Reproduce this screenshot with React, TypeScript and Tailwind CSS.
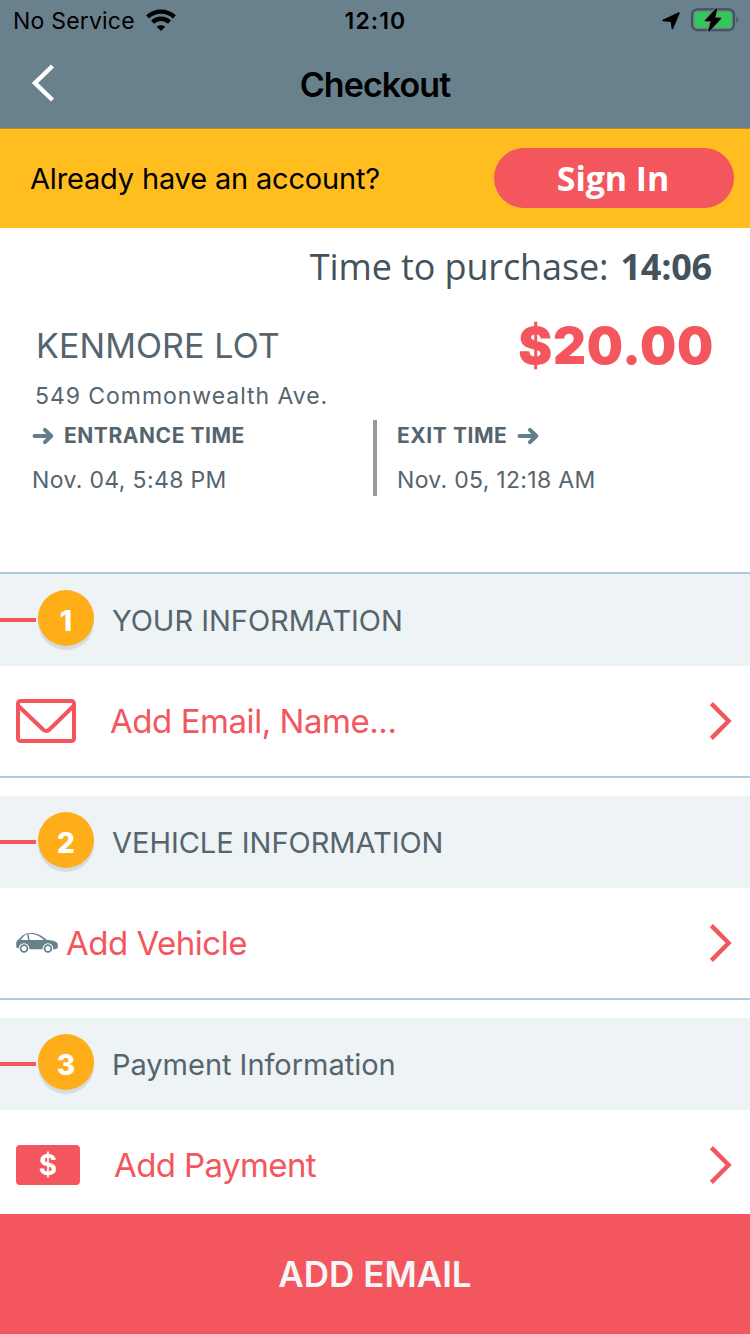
import React from "react";

function WifiIcon() {
  return (
    <svg className="ml-[11px] h-[22px] w-[30px]" viewBox="0 0 30 22" fill="none" stroke="#000" strokeWidth="4.400">
      <path d="M1.6 7.8C9.3 .9 20.7 .9 28.4 7.8" />
      <path d="M6.5 13.1C11.4 8.7 18.6 8.7 23.5 13.1" />
      <path d="M15 22L10.7 17.8C13.2 15.8 16.8 15.8 19.3 17.8Z" fill="#000" stroke="none" />
    </svg>
  );
}

function LocationIcon() {
  return (
    <svg className="mt-0.5 h-[18px] w-[18px]" viewBox="0 0 18 18" fill="#000" stroke="#000" strokeWidth="1.6" strokeLinejoin="round">
      <path d="M17 1L10.400 16.400L9.400 9.200L1.200 8.400Z" />
    </svg>
  );
}

function BatteryIcon() {
  return (
    <svg className="ml-[11px] h-6 w-[47px]" viewBox="0 0 47 24">
      <rect x="1" y="1.2" width="42" height="21" rx="5.5" fill="none" stroke="#434f5a" strokeWidth="2" />
      <rect x="3.6" y="3.8" width="37" height="16" rx="3" fill="#33c75a" />
      <path d="M45.500 8.5c2 1.4 2 5 0 6.500z" fill="#434f5a" />
      <path d="M25.500 .5L14.500 12.800h6L17.500 23.200L29.500 10.300h-6z" fill="#000" stroke="#69818d" strokeWidth="3" strokeLinejoin="round" />
      <path d="M25.500 .9L14.800 12.500h6L18 22.700L29.200 10.500h-6z" fill="#000" stroke="#000" strokeWidth="1.500" strokeLinejoin="round" />
    </svg>
  );
}

function ArrowIcon() {
  return (
    <svg className="h-[18px] w-[22px]" viewBox="0 0 22 18" fill="none" stroke="#637e8c" strokeWidth="4" strokeLinecap="round" strokeLinejoin="round">
      <path d="M2.500 9H18.500M13 2.800L19.200 9L13 15.200" />
    </svg>
  );
}

function Chevron() {
  return (
    <svg className="ml-auto h-[40px] w-6" viewBox="0 0 24 40" fill="none" stroke="#f3565d" strokeWidth="4.400">
      <path d="M2.400 2.600L19.600 20L2.400 37.400" />
    </svg>
  );
}

function EnvelopeIcon() {
  return (
    <svg className="h-11 w-[60px]" viewBox="0 0 60 44" fill="none" stroke="#f3565d" strokeWidth="4" strokeLinejoin="round">
      <rect x="2" y="2" width="56" height="40" rx="2.500" />
      <path d="M2.500 7L26.500 30Q30 34 34 30L57.500 7" />
    </svg>
  );
}

function CarIcon() {
  return (
    <svg className="h-5 w-[42px]" viewBox="0 0 42 20" fill="none">
      <path
        d="M.2 14.500V9.500Q.5 7 3 6L6.500 2.500Q10 .1 15 .1C21.500 .1 25 2.200 30.500 6.800C36 7.200 41.800 8.500 41.800 11.500V15L39.500 16.200H37.100A5.300 5.300 0 0 0 26.600 16.200H13.300A5.300 5.300 0 0 0 2.800 15.400Z"
        fill="#68818d"
      />
      <path d="M4.600 6.900L7.800 3.200Q9 1.600 11 1.200L12.200 7Z M12.400 1.100C19 .4 23.500 3 28 7H13.600Z" fill="#fff" />
      <circle cx="8" cy="15.500" r="5.300" fill="#fff" />
      <circle cx="31.900" cy="15.500" r="5.300" fill="#fff" />
      <circle cx="8" cy="15.500" r="3.400" stroke="#68818d" strokeWidth="1.800" />
      <circle cx="31.900" cy="15.500" r="3.400" stroke="#68818d" strokeWidth="1.800" />
    </svg>
  );
}

function CashIcon() {
  return (
    <div className="flex h-10 w-16 items-center justify-center rounded-[4px] bg-[#f3565d] text-[28px] leading-10 font-bold text-white">
      $
    </div>
  );
}

function SectionHeader({ step, title, titleClass }: { step: number; title: string; titleClass: string }) {
  return (
    <div className="flex h-[92px] items-center bg-[#eef3f6]">
      <div className="h-1 w-9 bg-[#f3565d]" />
      <div className="ml-0.5 mb-1 flex h-14 w-14 items-center justify-center rounded-full bg-[#ffae1a] pt-1.5 text-[28px] font-extrabold text-white shadow-[0_4px_1px_#d6dbe0]">
        {step}
      </div>
      <h2 className={"ml-[18px] pt-0.5 text-[29px] leading-[40px] whitespace-nowrap text-[#55646d] " + titleClass}>{title}</h2>
    </div>
  );
}

function ActionRow({ icon, label, labelClass }: { icon: React.ReactNode; label: string; labelClass: string }) {
  return (
    <button className="flex h-[110px] w-full items-center pr-[17px] pl-4 text-left">
      {icon}
      <span className={"text-[33px] leading-[40px] whitespace-nowrap text-[#f3565d] " + labelClass}>{label}</span>
      <Chevron />
    </button>
  );
}

export default function App() {
  return (
    <div className="flex h-[1334px] w-[750px] flex-col overflow-hidden bg-white font-['Inter',sans-serif]">
      <header className="h-32 shrink-0 bg-[#69818d] text-black">
        <div className="grid h-10 grid-cols-[1fr_auto_1fr] items-center pr-3 pl-[13px]">
          <div className="flex items-center">
            <span className="pt-0.5 text-[23px] tracking-[0.2px] whitespace-nowrap">No Service</span>
            <WifiIcon />
          </div>
          <span className="pt-0.5 text-[23px] font-semibold tracking-[1.1px]">12:10</span>
          <div className="flex items-center justify-end">
            <LocationIcon />
            <BatteryIcon />
          </div>
        </div>
        <div className="grid h-[88px] grid-cols-[100px_1fr_100px] items-center">
          <svg className="mb-0.5 ml-8 h-[38px] w-6" viewBox="0 0 24 38" fill="none" stroke="#fff" strokeWidth="4.400">
            <path d="M20.500 2L3 19L20.500 36" />
          </svg>
          <h1 className="text-center text-[34px] font-semibold tracking-[-0.9px]">Checkout</h1>
        </div>
      </header>

      <div className="flex h-[100px] shrink-0 items-center justify-between border-t border-[#b98a28] bg-[#ffbd20] pr-4 pb-px pl-[30px]">
        <span className="pt-px text-[29px] tracking-[-0.17px] whitespace-nowrap text-black">Already have an account?</span>
        <button className="h-[60px] w-60 rounded-full bg-[#f3565d] pr-0.5 font-['Open_Sans',sans-serif] text-[34px] leading-[60px] font-bold tracking-[-0.1px] text-white">
          Sign In
        </button>
      </div>

      <section className="h-[344px] shrink-0 text-[#55646d]">
        <p className="flex h-[78px] items-center justify-end gap-3 pr-[38px] font-['Open_Sans',sans-serif] text-[36px] whitespace-nowrap text-[#44525c]">
          <span className="tracking-[-0.12px]">Time to purchase:</span>
          <b className="tracking-[-0.2px]">14:06</b>
        </p>
        <div className="flex h-[78px] items-center justify-between pr-9 pl-9">
          <span className="text-[34px] tracking-[0.1px] whitespace-nowrap">KENMORE LOT</span>
          <span className="pt-0.5 text-[51px] font-black tracking-[0.7px] whitespace-nowrap text-[#f3565d]">$20.00</span>
        </div>
        <p className="h-9 pl-[35px] text-[23px] leading-[24px] tracking-[0.95px] whitespace-nowrap">549 Commonwealth Ave.</p>
        <div className="flex h-[76px]">
          <div className="w-[373px] pl-8">
            <div className="flex h-8 items-center gap-[10px]">
              <ArrowIcon />
              <span className="text-[21px] font-bold tracking-[0.55px] whitespace-nowrap">ENTRANCE TIME</span>
            </div>
            <p className="text-[23px] leading-[56px] tracking-[0.36px] whitespace-nowrap">Nov. 04, 5:48 PM</p>
          </div>
          <div className="w-1 bg-[#999]" />
          <div className="pl-5">
            <div className="flex h-8 items-center gap-[10px]">
              <span className="text-[21px] font-bold tracking-[0.55px] whitespace-nowrap">EXIT TIME</span>
              <ArrowIcon />
            </div>
            <p className="text-[23px] leading-[56px] tracking-[0.3px] whitespace-nowrap">Nov. 05, 12:18 AM</p>
          </div>
        </div>
      </section>

      <main className="h-[642px] shrink-0 overflow-hidden">
        <section className="border-y-2 border-[#a9cddc]">
          <SectionHeader step={1} title="YOUR INFORMATION" titleClass="tracking-[-0.02px]" />
          <ActionRow icon={<EnvelopeIcon />} label="Add Email, Name..." labelClass="ml-[34px] tracking-[-0.45px]" />
        </section>
        <section className="mt-[18px] border-b-2 border-[#a9cddc]">
          <SectionHeader step={2} title="VEHICLE INFORMATION" titleClass="tracking-[-0.02px]" />
          <ActionRow icon={<CarIcon />} label="Add Vehicle" labelClass="ml-2 tracking-[-0.5px]" />
        </section>
        <section className="mt-[18px]">
          <SectionHeader step={3} title="Payment Information" titleClass="tracking-[-0.02px]" />
          <ActionRow icon={<CashIcon />} label="Add Payment" labelClass="ml-[34px] tracking-[-0.6px]" />
        </section>
      </main>

      <button className="h-[120px] w-full shrink-0 bg-[#f3565d] text-[35px] leading-[120px] font-semibold text-[#f4f6f8]">
        ADD EMAIL
      </button>
    </div>
  );
}
